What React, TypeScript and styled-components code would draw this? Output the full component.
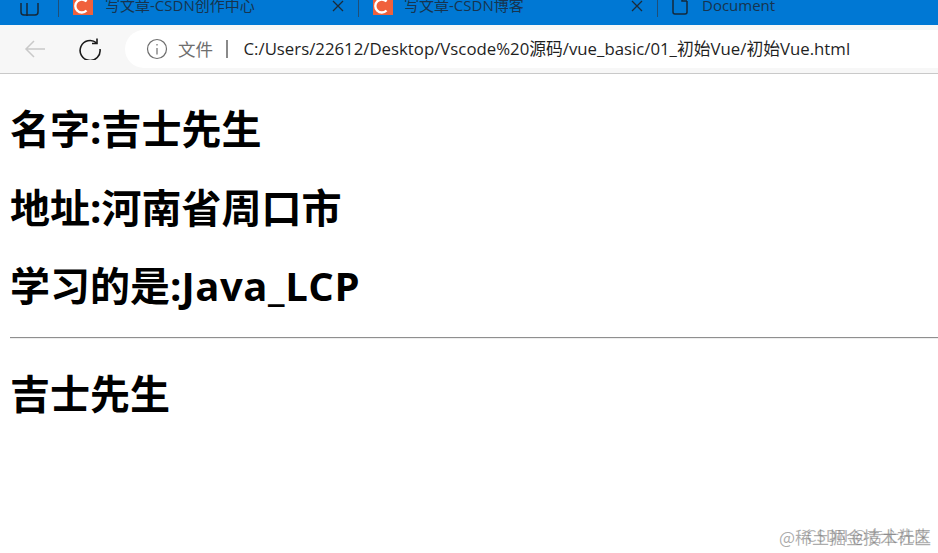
import React from "react";
import styled, { createGlobalStyle } from "styled-components";

const Global = createGlobalStyle`
  html, body { margin: 0; padding: 0; background: #fff; overflow: hidden; }
  body { font-family: "Open Sans", "Noto Sans CJK SC", sans-serif; }
`;
const Page = styled.div`
  position: relative;
  width: 938px;
  height: 553px;
  overflow: hidden;
  display: flex;
  flex-direction: column;
`;
const TabBar = styled.div`
  height: 25px;
  background: #0078d4;
  display: flex;
  align-items: flex-start;
  overflow: hidden;
  flex: none;
`;
const SideBtn = styled.div`
  width: 58px;
  height: 25px;
  flex: none;
  padding-left: 20px;
  box-sizing: border-box;
`;
const Tab = styled.div<{ $w: number }>`
  width: ${(p) => p.$w}px;
  height: 17px;
  flex: none;
  display: flex;
  align-items: flex-start;
  border-left: 1px solid #1f4f78;
  box-sizing: border-box;
`;
const TabIcon = styled.div`
  width: 20px;
  height: 15px;
  margin-left: 14px;
  background: #f0603c;
  flex: none;
  overflow: hidden;
  svg { display: block; }
`;
const DocIcon = styled.svg`
  width: 16px;
  height: 15px;
  margin-left: 14px;
  flex: none;
`;
const TabTitle = styled.div<{ $gap?: number }>`
  margin-left: ${(p) => p.$gap ?? 12}px;
  margin-top: -5px;
  font: 15px/20px "Open Sans", "Noto Sans CJK SC", sans-serif;
  color: #17344f;
  white-space: nowrap;
  flex: 1;
`;
const Close = styled.svg`
  width: 12px;
  height: 12px;
  margin: 0 14px 0 0;
  flex: none;
`;
const NavBar = styled.div`
  height: 48px;
  background: #f7f7f7;
  border-bottom: 1px solid #c9c9c9;
  display: flex;
  align-items: center;
  flex: none;
  padding-left: 24px;
`;
const NavIcon = styled.svg`
  width: 22px;
  height: 22px;
  flex: none;
`;
const Spacer = styled.div`
  width: 33px;
  flex: none;
`;
const Omnibox = styled.div`
  margin-left: 24px;
  height: 38px;
  flex: 1;
  background: #fff;
  border-radius: 19px 0 0 19px;
  display: flex;
  align-items: center;
  padding-left: 21px;
  margin-top: -1px;
`;
const Chip = styled.span`
  font: 17.5px/20px "Noto Sans CJK SC", sans-serif;
  color: #6e6e6e;
  margin-left: 10px;
`;
const Bar = styled.span`
  width: 1.5px;
  height: 18px;
  background: #8a8a8a;
  margin: 0 16px 0 13px;
`;
const Url = styled.span`
  font: 16.8px/20px "Open Sans", "Noto Sans CJK SC", sans-serif;
  color: #1f1f1f;
  white-space: nowrap;
`;
const Content = styled.main`
  padding: 28px 10px 0;
`;
const Title = styled.h1`
  margin: 0 0 25.5px;
  font: 700 40px/53px "Open Sans", "Noto Sans CJK SC", sans-serif;
  color: #000;
  white-space: nowrap;
`;
const Latin = styled.span`
  letter-spacing: 0.6px;
`;
const Rule = styled.hr`
  margin: -1px -10px 28px 0;
  border: none;
  border-top: 1px solid #8f8f8f;
  border-bottom: 1px solid #eee;
`;
const Mark = styled.div`
  position: absolute;
  right: 7px;
  bottom: 6px;
  font: 17px/20px "Noto Sans CJK SC", sans-serif;
  color: rgba(90, 90, 90, 0.5);
  white-space: nowrap;
`;
const MarkOver = styled(Mark)`
  bottom: 8px;
  font-size: 16px;
  color: rgba(110, 110, 110, 0.5);
`;

const X = () => (
  <Close viewBox="0 0 12 12" fill="none" stroke="#1b2b3a" strokeWidth="1.3">
    <path d="M1 1l10 10M11 1L1 11" />
  </Close>
);
const CIcon = () => (
  <TabIcon>
    <svg width="20" height="15" viewBox="0 0 20 15" fill="none" stroke="#fff" strokeWidth="2.4">
      <path d="M13.5 1.5 A6.5 6.5 0 1 0 13.5 10.5" />
    </svg>
  </TabIcon>
);

export default function App() {
  return (
    <Page>
      <Global />
      <TabBar>
        <SideBtn>
          <svg width="20" height="14" viewBox="0 0 20 14" fill="none" stroke="#14283a" strokeWidth="1.5">
            <path d="M2 -4h14a2 2 0 0 1 2 2v11a3 3 0 0 1-3 3H4a3 3 0 0 1-3-3V-2M7 -4v17" />
          </svg>
        </SideBtn>
        <Tab $w={300}>
          <CIcon />
          <TabTitle>写文章-CSDN创作中心</TabTitle>
          <X />
        </Tab>
        <Tab $w={299}>
          <CIcon />
          <TabTitle $gap={11}>写文章-CSDN博客</TabTitle>
          <X />
        </Tab>
        <Tab $w={300}>
          <DocIcon viewBox="0 0 16 15" fill="none" stroke="#14283a" strokeWidth="1.5">
            <path d="M1 -3v15a2 2 0 0 0 2 2h10a2 2 0 0 0 2-2V1M10 -3v4h5" />
          </DocIcon>
          <TabTitle $gap={14}>Document</TabTitle>
        </Tab>
      </TabBar>
      <NavBar>
        <NavIcon viewBox="0 0 22 22" fill="none" stroke="#c9c9c9" strokeWidth="1.5">
          <path d="M21 11H2M10 3l-8 8 8 8" />
        </NavIcon>
        <Spacer />
        <NavIcon viewBox="0 0 22 22" fill="none" stroke="#1a1a1a" strokeWidth="1.6">
          <path d="M17.5 4.8A10 10 0 1 0 21 11" />
          <path d="M18 0.5v5h-5" />
        </NavIcon>
        <Omnibox>
          <NavIcon viewBox="0 0 22 22" fill="none" stroke="#6e6e6e" strokeWidth="1.2">
            <circle cx="11" cy="11" r="9.5" />
            <path d="M11 10v6.5M11 6v1.6" />
          </NavIcon>
          <Chip>文件</Chip>
          <Bar />
          <Url>C:/Users/22612/Desktop/Vscode%20源码/vue_basic/01_初始Vue/初始Vue.html</Url>
        </Omnibox>
      </NavBar>
      <Content>
        <Title>名字:吉士先生</Title>
        <Title>地址:河南省周口市</Title>
        <Title>学习的是:<Latin>Java_LCP</Latin></Title>
        <Rule />
        <Title>吉士先生</Title>
      </Content>
      <Mark>@稀土掘金技术社区</Mark>
      <MarkOver>CSDN @吉士先生</MarkOver>
    </Page>
  );
}
